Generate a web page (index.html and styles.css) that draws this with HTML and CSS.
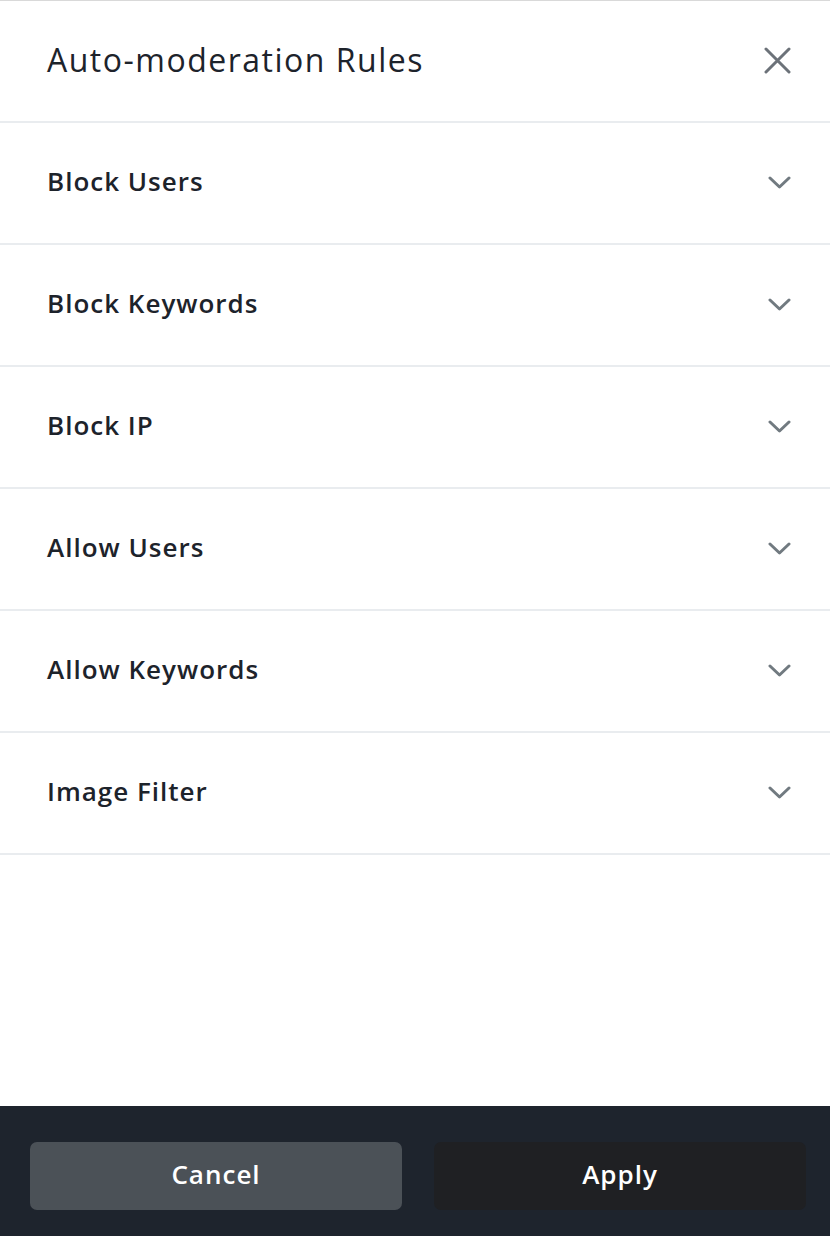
FILE: index.html
```html
<!DOCTYPE html>
<html>
<head>
<meta charset="utf-8">
<link rel="stylesheet" href="styles.css">
</head>
<body>
<div class="panel">
  <div class="header">
    <h1 class="title">Auto-moderation Rules</h1>
    <svg class="close" width="27" height="27" viewBox="0 0 27 27"><path d="M2 2 L25 25 M25 2 L2 25" stroke="#6c7279" stroke-width="3" stroke-linecap="round" fill="none"/></svg>
  </div>
  <div class="row"><span class="label">Block Users</span><svg class="chev" width="23" height="13" viewBox="0 0 23 13"><path d="M2 2 L11.5 11 L21 2" stroke="#717a80" stroke-width="3" stroke-linecap="round" stroke-linejoin="round" fill="none"/></svg></div>
  <div class="row"><span class="label">Block Keywords</span><svg class="chev" width="23" height="13" viewBox="0 0 23 13"><path d="M2 2 L11.5 11 L21 2" stroke="#717a80" stroke-width="3" stroke-linecap="round" stroke-linejoin="round" fill="none"/></svg></div>
  <div class="row"><span class="label">Block IP</span><svg class="chev" width="23" height="13" viewBox="0 0 23 13"><path d="M2 2 L11.5 11 L21 2" stroke="#717a80" stroke-width="3" stroke-linecap="round" stroke-linejoin="round" fill="none"/></svg></div>
  <div class="row"><span class="label">Allow Users</span><svg class="chev" width="23" height="13" viewBox="0 0 23 13"><path d="M2 2 L11.5 11 L21 2" stroke="#717a80" stroke-width="3" stroke-linecap="round" stroke-linejoin="round" fill="none"/></svg></div>
  <div class="row"><span class="label">Allow Keywords</span><svg class="chev" width="23" height="13" viewBox="0 0 23 13"><path d="M2 2 L11.5 11 L21 2" stroke="#717a80" stroke-width="3" stroke-linecap="round" stroke-linejoin="round" fill="none"/></svg></div>
  <div class="row"><span class="label">Image Filter</span><svg class="chev" width="23" height="13" viewBox="0 0 23 13"><path d="M2 2 L11.5 11 L21 2" stroke="#717a80" stroke-width="3" stroke-linecap="round" stroke-linejoin="round" fill="none"/></svg></div>
  <div class="spacer"></div>
  <div class="footer">
    <button class="btn cancel">Cancel</button>
    <button class="btn apply">Apply</button>
  </div>
</div>
</body>
</html>
```
FILE: styles.css
```css
html, body {
  margin: 0;
  padding: 0;
  background: #ffffff;
}
body {
  font-family: "Open Sans", Lato, sans-serif;
  color: #1d232b;
}
.panel {
  display: flex;
  flex-direction: column;
  height: 1236px;
  border-top: 1px solid #d9d9d9;
  box-sizing: border-box;
}
.header {
  height: 120px;
  flex: none;
  display: flex;
  align-items: center;
  justify-content: space-between;
  padding: 0 39px 0 47px;
  border-bottom: 2px solid #e9ecef;
}
.title {
  margin: 0 0 3px 0;
  font-size: 32px;
  line-height: 1;
  font-weight: 400;
  letter-spacing: 1.5px;
}
.close {
  display: block;
  margin-top: -2px;
}
.row {
  height: 120px;
  flex: none;
  display: flex;
  align-items: center;
  justify-content: space-between;
  padding: 0 39px 0 47px;
  border-bottom: 2px solid #e9ecef;
}
.label {
  font-size: 26px;
  line-height: 1;
  font-weight: 600;
  letter-spacing: 1px;
  margin-bottom: 5px;
}
.chev {
  display: block;
  margin-top: -2px;
}
.spacer {
  flex: 1;
}
.footer {
  height: 130px;
  flex: none;
  background: #1e242d;
  display: flex;
  gap: 32px;
  padding: 36px 24px 26px 30px;
  box-sizing: border-box;
}
.btn {
  flex: 1;
  border: none;
  border-radius: 7px;
  color: #ffffff;
  font-family: "Open Sans", Lato, sans-serif;
  font-size: 26px;
  font-weight: 600;
  letter-spacing: 1px;
  padding: 0 0 5px 0;
}
.cancel {
  background: #4b5157;
}
.apply {
  background: #1f2023;
}
```
